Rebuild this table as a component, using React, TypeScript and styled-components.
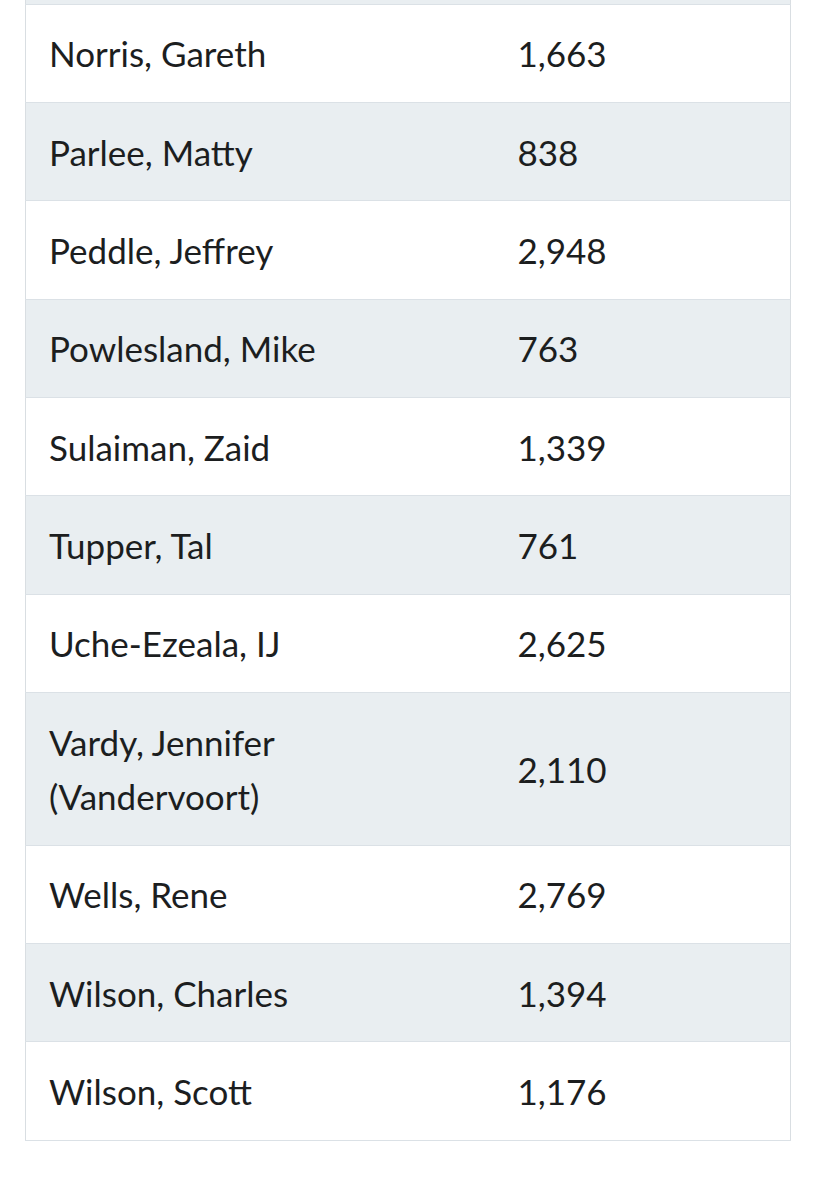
import React from 'react';
import styled, { createGlobalStyle } from 'styled-components';

interface Entry {
  name: string;
  votes: string;
}

const entries: Entry[] = [
  { name: 'Norris, Gareth', votes: '1,663' },
  { name: 'Parlee, Matty', votes: '838' },
  { name: 'Peddle, Jeffrey', votes: '2,948' },
  { name: 'Powlesland, Mike', votes: '763' },
  { name: 'Sulaiman, Zaid', votes: '1,339' },
  { name: 'Tupper, Tal', votes: '761' },
  { name: 'Uche-Ezeala, IJ', votes: '2,625' },
  { name: 'Vardy, Jennifer (Vandervoort)', votes: '2,110' },
  { name: 'Wells, Rene', votes: '2,769' },
  { name: 'Wilson, Charles', votes: '1,394' },
  { name: 'Wilson, Scott', votes: '1,176' },
];

const App: React.FC = () => {
  return (
    <Page>
      <GlobalStyle />
      <Table>
        <colgroup>
          <NameCol />
          <col />
        </colgroup>
        <tbody>
          {/* tail of the row scrolled off above */}
          <CutRow>
            <td colSpan={2} />
          </CutRow>
          {entries.map((e, i) => (
            <Row key={e.name} $shaded={i % 2 === 1}>
              <Cell>{e.name}</Cell>
              <Cell>{e.votes}</Cell>
            </Row>
          ))}
        </tbody>
      </Table>
    </Page>
  );
};

export default App;

// Styled components

const GlobalStyle = createGlobalStyle`
  body {
    margin: 0;
    background: #ffffff;
    font-family: Lato, "Noto Sans", sans-serif;
    color: #1c1e1f;
  }
`;

const Page = styled.div`
  padding: 0 25px;
  height: 1200px;
  box-sizing: border-box;
`;

const Table = styled.table`
  width: 766px;
  border-collapse: collapse;
  border-left: 1px solid #d9dee2;
  border-right: 1px solid #d9dee2;
  border-bottom: 1px solid #d9dee2;
  table-layout: fixed;
`;

const NameCol = styled.col`
  width: 469px;
`;

const CutRow = styled.tr`
  height: 4px;
  background: #e9eef1;
  border-bottom: 1px solid #dbe1e6;

  td {
    padding: 0;
  }
`;

const Row = styled.tr<{ $shaded: boolean }>`
  background: ${p => (p.$shaded ? '#e9eef1' : '#ffffff')};
  border-bottom: 1px solid #dbe1e6;
`;

const Cell = styled.td`
  font-size: 35px;
  line-height: 54px;
  padding: 21.7px 23px;
  vertical-align: middle;
  text-align: left;
`;
